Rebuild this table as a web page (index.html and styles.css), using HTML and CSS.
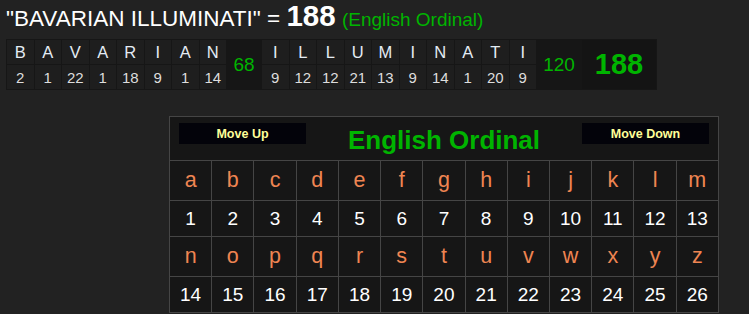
FILE: index.html
```html
<!DOCTYPE html>
<html>
<head>
<meta charset="utf-8">
<link rel="stylesheet" href="styles.css">
</head>
<body>
<div class="page">
  <div class="title">"BAVARIAN ILLUMINATI" = <b class="total">188</b> <span class="cipher-name">(English Ordinal)</span></div>
  <table class="breakdown">
    <tr class="letters">
      <td>B</td><td>A</td><td>V</td><td>A</td><td>R</td><td>I</td><td>A</td><td>N</td>
      <td class="sum w68" rowspan="2">68</td>
      <td>I</td><td>L</td><td>L</td><td>U</td><td>M</td><td>I</td><td>N</td><td>A</td><td>T</td><td>I</td>
      <td class="sum w120" rowspan="2">120</td>
      <td class="grand" rowspan="2">188</td>
    </tr>
    <tr class="values">
      <td>2</td><td>1</td><td>22</td><td>1</td><td>18</td><td>9</td><td>1</td><td>14</td>
      <td>9</td><td>12</td><td>12</td><td>21</td><td>13</td><td>9</td><td>14</td><td>1</td><td>20</td><td>9</td>
    </tr>
  </table>

  <table class="cipher">
    <tr class="head">
      <td colspan="13">
        <div class="head-inner">
          <button class="move">Move Up</button>
          <span class="cipher-title">English Ordinal</span>
          <button class="move">Move Down</button>
        </div>
      </td>
    </tr>
    <tr class="lrow">
      <td>a</td><td>b</td><td>c</td><td>d</td><td>e</td><td>f</td><td>g</td><td>h</td><td>i</td><td>j</td><td>k</td><td>l</td><td>m</td>
    </tr>
    <tr class="nrow">
      <td>1</td><td>2</td><td>3</td><td>4</td><td>5</td><td>6</td><td>7</td><td>8</td><td>9</td><td>10</td><td>11</td><td>12</td><td>13</td>
    </tr>
    <tr class="lrow">
      <td>n</td><td>o</td><td>p</td><td>q</td><td>r</td><td>s</td><td>t</td><td>u</td><td>v</td><td>w</td><td>x</td><td>y</td><td>z</td>
    </tr>
    <tr class="nrow">
      <td>14</td><td>15</td><td>16</td><td>17</td><td>18</td><td>19</td><td>20</td><td>21</td><td>22</td><td>23</td><td>24</td><td>25</td><td>26</td>
    </tr>
  </table>
</div>
</body>
</html>
```

FILE: styles.css
```css
html, body {
  margin: 0;
  padding: 0;
  background: #222222;
  font-family: "Liberation Sans", Arial, sans-serif;
  color: #ffffff;
  overflow: hidden;
}

.page {
  padding: 0 0 0 6px;
}

.title {
  font-size: 22.5px;
  line-height: 28px;
  padding-top: 2px;
  height: 30px;
  color: #ffffff;
  white-space: nowrap;
}

.total {
  font-size: 29.5px;
  font-weight: bold;
  line-height: 28px;
}

.cipher-name {
  font-size: 19px;
  color: #00b400;
}

.breakdown {
  margin-top: 7px;
  border-spacing: 1px;
  background: #161616;
  border-collapse: separate;
}

.breakdown td {
  width: 26.5px;
  padding: 0;
  text-align: center;
  background: #1e1e1e;
  height: 24px;
}

.breakdown .letters td {
  font-size: 16.5px;
  color: #e4ecf4;
}

.breakdown .values td {
  font-size: 15px;
  color: #dddddd;
}

.breakdown td.sum {
  background: #161616;
  color: #00b400;
  font-size: 19px;
}

.breakdown td.w68 { width: 34px; }
.breakdown td.w120 { width: 44px; }

.breakdown td.grand {
  background: #141414;
  color: #00b400;
  font-size: 29px;
  font-weight: bold;
  width: 74px;
}

.cipher {
  margin-top: 26px;
  margin-left: 163px;
  width: 550px;
  table-layout: fixed;
  border-collapse: collapse;
  background: #161616;
}

.cipher td {
  border: 1px solid #454545;
  text-align: center;
  padding: 0;
}

.cipher .head td {
  height: 43px;
  vertical-align: top;
}

.head-inner {
  display: flex;
  justify-content: space-between;
  align-items: flex-start;
  padding: 6px 9px 0 9px;
}

.move {
  width: 127px;
  height: 21px;
  background: #03030a;
  border: none;
  padding: 0;
  color: #ffff99;
  font-family: "Liberation Sans", Arial, sans-serif;
  font-weight: bold;
  font-size: 12.5px;
}

.cipher-title {
  color: #00b400;
  font-size: 26px;
  font-weight: bold;
  line-height: 30px;
  margin-top: 2px;
}

.cipher .lrow td {
  height: 39px;
  font-size: 21.5px;
  color: #ef8552;
}

.cipher .nrow td {
  height: 35px;
  font-size: 19px;
  color: #ffffff;
}
```
